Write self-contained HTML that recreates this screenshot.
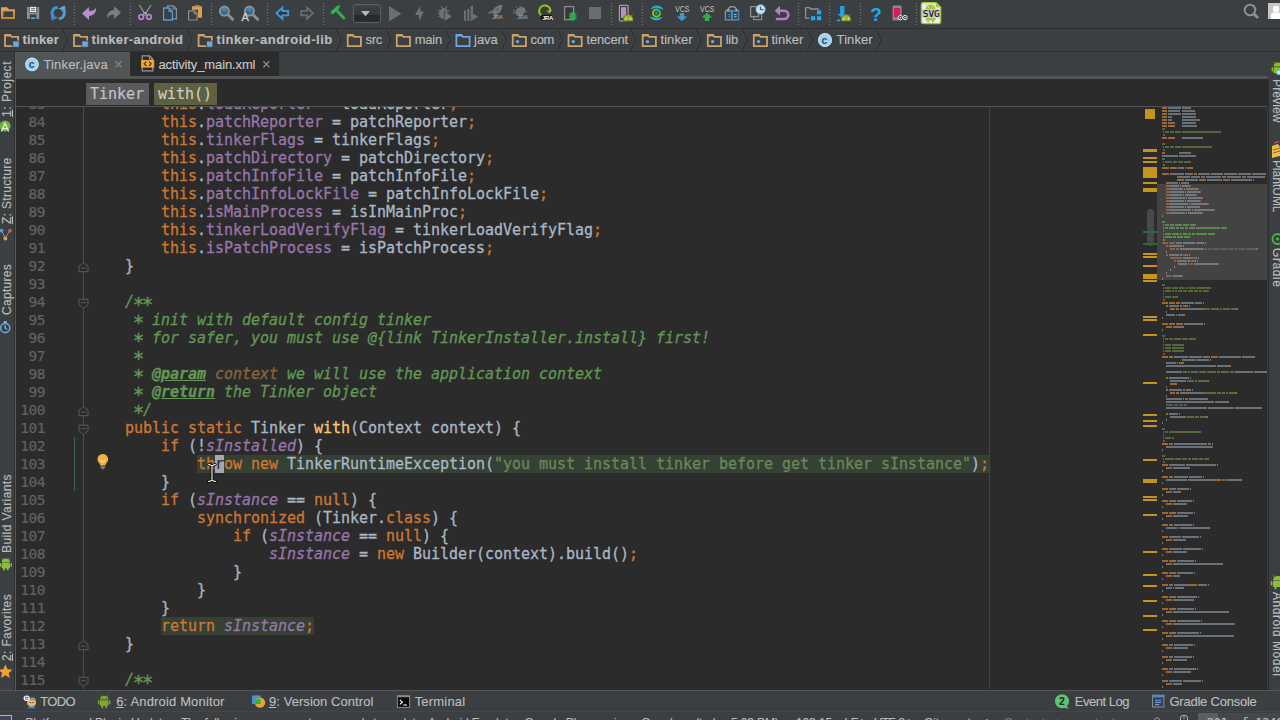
<!DOCTYPE html>
<html lang="en"><head><meta charset="utf-8"><title>Tinker.java - Android Studio</title>
<style>
*{margin:0;padding:0;box-sizing:border-box}
html,body{width:1280px;height:720px;overflow:hidden;background:#3c3f41}
body{-webkit-text-stroke:0.15px;position:relative;font-family:"Liberation Sans","DejaVu Sans",sans-serif;font-size:13px;color:#bbbbbb}
.abs{position:absolute}
svg text{-webkit-text-stroke:0}
#toolbar{left:0;top:0;width:1280px;height:28px;background:#3c3f41}
#tbline{left:0;top:28px;width:1280px;height:1px;background:#2b2d2e}
#nav{left:0;top:29px;width:1280px;height:22px;background:#3c3f41}
#navline{left:0;top:51px;width:1280px;height:1px;background:#2d2f30}
.ic{position:absolute;top:0;overflow:visible}
.sep{position:absolute;top:3px;width:1px;height:22px;background-image:linear-gradient(#6b6e70 50%,transparent 50%);background-size:1px 2px}
.crumb{position:absolute;top:0;height:22px;line-height:21px;white-space:nowrap;color:#bbbbbb;font-size:13px}
.crumb b{font-weight:bold}
#lstripe{left:0;top:52px;width:16px;z-index:5;height:638px;background:#3c3f41}
#rstripe{left:1269px;top:52px;width:11px;height:638px;background:#3c3f41}
.vtxt{position:absolute;white-space:nowrap;font-size:12px;color:#bbbbbb;transform-origin:0 0}
#tabs{left:15px;top:52px;width:1254px;height:25px;background:#3c3f41}
.tab{position:absolute;top:1px;height:24px;line-height:24px;font-size:13px;white-space:nowrap}
#crumbs{left:15px;top:79px;width:1254px;height:28px;background:#2b2b2b;z-index:2}
#editor{left:15px;top:106px;width:1254px;height:584px;background:#2b2b2b;overflow:hidden}
#gutter{left:0;top:0;width:69px;height:583px;background:#2b2b2b}
.ln{position:absolute;left:0;width:30.1px;text-align:right;height:18px;line-height:18px;color:#606366;font-family:"DejaVu Sans Mono","Liberation Mono",monospace;font-size:14.5px;letter-spacing:-0.45px;-webkit-text-stroke:0.2px}
.cl{-webkit-text-stroke:0.3px;position:absolute;left:74px;height:18px;line-height:18px;white-space:pre;color:#a9b7c6;font-family:"DejaVu Sans Mono","Liberation Mono",monospace;font-size:15px;letter-spacing:-0.031px}
.k{color:#cc7832}.f{color:#9876aa}.sf{color:#9876aa;font-style:italic}.m{color:#ffc66d}
.d{color:#629755;font-style:italic}.dt{color:#629755;font-style:italic;font-weight:bold;text-decoration:underline}.dp{color:#8a653b;font-style:italic}
.s{color:#6a8759}
.as{display:inline-block;font-style:normal;transform:translateY(2.9px) scale(1.28)}
.hl{background:#344134}
#bottombar{left:0;top:690px;width:1280px;height:23px;background:#3c3f41}
#status{left:0;top:713px;width:1280px;height:7px;background:#3c3f41;overflow:hidden}
.bt{position:absolute;top:0;height:24px;line-height:24px;font-size:13px;color:#bbbbbb;white-space:nowrap}
.bt u{text-decoration:underline}
.st{position:absolute;top:0px;font-size:12px;line-height:14px;color:#bbbbbb;white-space:nowrap}
</style></head>
<body>
<div id="toolbar" class="abs">
<svg class="abs" style="left:0;top:0" width="1280" height="28" viewBox="0 0 1280 28">
<defs>
<linearGradient id="gfold" x1="0" y1="0" x2="0" y2="1"><stop offset="0" stop-color="#dfa65a"/><stop offset="1" stop-color="#c4822c"/></linearGradient>
<linearGradient id="gblue" x1="0" y1="0" x2="0" y2="1"><stop offset="0" stop-color="#5aa6d6"/><stop offset="1" stop-color="#2f86bd"/></linearGradient>
<linearGradient id="gcombo" x1="0" y1="0" x2="0" y2="1"><stop offset="0" stop-color="#454748"/><stop offset="0.15" stop-color="#3a4042"/><stop offset="0.57" stop-color="#34393b"/><stop offset="0.58" stop-color="#292929"/><stop offset="1" stop-color="#2b2b2b"/></linearGradient>
<radialGradient id="glens" cx="0.5" cy="0.3" r="0.65"><stop offset="0" stop-color="#3f95d0"/><stop offset="1" stop-color="#1f4e75"/></radialGradient>
</defs>
<!-- separators -->
<g stroke="#75787a" stroke-width="1.2" stroke-dasharray="1.1 1.9">
<path d="M74.5 3v23M130.5 3v23M211.5 3v23M267.5 3v23M323.5 3v23M611.5 3v23M642.5 3v23M798.5 3v23M829.5 3v23M860.5 3v23M916.5 3v23"/>
</g>
<!-- open folder -->
<path d="M1 7.2h6.2l1.8 2h6v9.8h-14z" fill="url(#gfold)"/><rect x="3.4" y="11.4" width="9.6" height="5.6" fill="#3c3f41"/>
<!-- save -->
<path d="M27 7h12.2v12H27z" fill="#8e8e8e"/><rect x="29.6" y="6.4" width="7" height="6" rx="0.6" fill="#ffffff" stroke="#3c3f41" stroke-width="0.8"/><path d="M31 8.3h4.3M31 10.3h4.3" stroke="#444" stroke-width="0.9"/><rect x="29.8" y="14.6" width="6.6" height="4.6" fill="#3c3f41"/><rect x="31" y="17.2" width="4.2" height="1.8" fill="#4aa3d9"/>
<!-- sync -->
<g fill="none" stroke-width="3"><path d="M57.6 7.6a5.400 5.400 0 0 0 -3.200 9.800" stroke="#3e93cb"/><path d="M58.8 18.600a5.400 5.400 0 0 0 3.200 -9.800" stroke="#4c9dd2"/></g>
<path d="M50.8 15.800l7.600 1.600l-6.800 3.200z" fill="#3a8ec6"/><path d="M65.600 10.400l-7.600 -1.600l6.800 -3.200z" fill="#62abdb"/>
<!-- undo -->
<path d="M82 13.5l7 -6.5v4c3.5 0 6 -1 7 -3.2c0.6 4.5 -2.5 8 -7 8.2v4z" fill="#b98fcb"/>
<!-- redo -->
<path d="M121 12.6l-7 -6.4v3.8c-4.5 0.2 -7.3 3.5 -7 8.2c1.4 -2.4 3.6 -3.6 7 -3.6v4.4z" fill="#7d7d7d"/>
<!-- cut -->
<path d="M139.3 5l5.9 9.2M151 5l-5.9 9.2" stroke="#a2a2a2" stroke-width="1.1" fill="none"/><rect x="143.8" y="12.6" width="2.6" height="2.6" fill="none" stroke="#b8b8b8" stroke-width="0.7"/>
<circle cx="141.2" cy="17" r="2.3" fill="none" stroke="#b583d3" stroke-width="1.7"/><circle cx="149" cy="17" r="2.3" fill="none" stroke="#b583d3" stroke-width="1.7"/>
<!-- copy -->
<path d="M167.6 5.8h5.8l3 3v10h-8.8z" fill="#3c3f41" stroke="#909090" stroke-width="1.2"/><path d="M173.2 5.8v3.2h3.2" fill="none" stroke="#909090" stroke-width="1"/>
<path d="M163.6 8h5.6l3.2 3.2v8.8h-8.8z" fill="#3c3f41" stroke="#4d9fd4" stroke-width="1.3"/><path d="M169 8v3.4h3.4" fill="none" stroke="#4d9fd4" stroke-width="1.1"/>
<!-- paste -->
<path d="M192 6.2h10v11.6h-4v-8h-6z" fill="#dba04c"/><rect x="195" y="5" width="4.6" height="1.6" fill="#8a8a8a"/>
<path d="M188.6 10.8h5.6l2.8 2.8v6.4h-8.4z" fill="#3c3f41" stroke="#8e8e8e" stroke-width="1.2"/><path d="M194 10.8v3h3" fill="none" stroke="#8e8e8e" stroke-width="1"/>
<!-- find -->
<circle cx="224.4" cy="11.1" r="4.5" fill="url(#glens)" stroke="#8d8d8d" stroke-width="2.1"/><path d="M228.3 15l4.300 4.300" stroke="#8d8d8d" stroke-width="3" stroke-linecap="round"/>
<!-- replace -->
<circle cx="249.4" cy="11.1" r="4.5" fill="url(#glens)" stroke="#8d8d8d" stroke-width="2.1"/><path d="M253.3 15l4.300 4.300" stroke="#8d8d8d" stroke-width="3" stroke-linecap="round"/>
<text x="241.6" y="20.6" font-family="Liberation Sans, sans-serif" font-size="11" fill="#d2d2d2" stroke="#d2d2d2" stroke-width="0.3">A</text>
<!-- back -->
<path d="M276.4 13.2l6 -5.6v3.4h5.8v4.4h-5.8v3.4z" fill="#34383b" stroke="#3d97d6" stroke-width="1.9" stroke-linejoin="miter"/>
<!-- forward -->
<path d="M313 13.2l-6 -5.6v3.4h-5.8v4.4h5.8v3.4z" fill="#3c3f41" stroke="#6d6f70" stroke-width="1.7"/>
<!-- hammer -->
<path d="M332.4 12.4l5.4 -4.8" stroke="#2fb552" stroke-width="3.4" stroke-linecap="round"/><path d="M337.2 7l2.2 -1" stroke="#2fb552" stroke-width="1.6" stroke-linecap="round"/><path d="M336.6 10.4l7.2 7.6" stroke="#2fb552" stroke-width="2.8" stroke-linecap="round"/>
<!-- combo -->
<rect x="353.5" y="4.5" width="27" height="18" rx="2.5" fill="url(#gcombo)" stroke="#5d6062" stroke-width="1"/>
<path d="M361 11h9l-4.5 5.2z" fill="#b4b8b7"/>
<!-- run -->
<path d="M389 6v15.4l12.4 -7.7z" fill="#6c6e6f"/>
<!-- lightning -->
<path d="M420 5.8l-4.8 9.2h3.6l0.4 5.8l4.6 -9.4h-3.4z" fill="#727374"/>
<!-- debug -->
<g fill="#6f7071"><ellipse cx="443.8" cy="13.6" rx="4.6" ry="5.6"/><path d="M441.2 6.2l1.6 2.6M446.8 6.2l-1.6 2.6M438.2 10.6h2M438.2 13.4h2M438.2 16.2h2M449.4 10.6h-2" stroke="#6f7071" stroke-width="1.1" fill="none"/></g>
<path d="M444.4 11v10.6l8 -5.3z" fill="#747576" stroke="#3c3f41" stroke-width="0.8"/>
<!-- coverage -->
<g fill="#6d6e6f"><rect x="464" y="10.4" width="2" height="10.6"/><rect x="467.2" y="9" width="2.2" height="12"/><rect x="470.6" y="6" width="2.4" height="7"/><path d="M470.6 12v9.4l7.4 -4.8z"/></g>
<!-- rocket JR -->
<g fill="#747576"><path d="M502.4 4.8c-4.6 0 -8.6 2.8 -10.6 7.6l3.4 3c4.8 -2 7.2 -5.6 7.2 -10.600z"/><path d="M492.400 9.8l-4.800 3.400l3.600 0.600z"/><path d="M497 14.6l-0.400 3.600l-2.200 -2.400z"/></g><circle cx="497.600" cy="9.400" r="1.300" fill="#5f6162"/>
<text x="492" y="19.4" font-family="Liberation Sans, sans-serif" font-size="5.8" font-weight="bold" fill="#929394" letter-spacing="-0.35">JRA</text>
<!-- bug JR -->
<g fill="#747576"><ellipse cx="520.4" cy="11.4" rx="5.4" ry="4" transform="rotate(-35 520.4 11.4)"/><path d="M515.6 6.6l2 2M520 5.4l0.4 2.4M513 10l2.6 1M512.6 12.8l2.4 0M526.8 11.6l-2.4 0" stroke="#747576" stroke-width="1" fill="none"/></g>
<text x="517" y="19.4" font-family="Liberation Sans, sans-serif" font-size="5.8" font-weight="bold" fill="#929394" letter-spacing="-0.35">JRA</text>
<!-- reload JR -->
<path d="M542.6 16.2a5.6 5.6 0 1 1 7.8 -5" fill="none" stroke="#8dc51f" stroke-width="2.1"/><path d="M546.8 10.4h4.8l-2.2 3.4z" fill="#8dc51f"/>
<rect x="540.6" y="14.8" width="12" height="5.6" rx="1.4" fill="#141414"/>
<text x="542.2" y="19.6" font-family="Liberation Sans, sans-serif" font-size="5.8" font-weight="bold" fill="#ffffff" letter-spacing="-0.35">JRA</text>
<!-- attach debugger -->
<rect x="564.6" y="6.6" width="9" height="13" fill="#36393b" stroke="#8b8b8b" stroke-width="1.3"/>
<g fill="#2fab50"><ellipse cx="572.8" cy="16.4" rx="2.8" ry="4.4"/><path d="M569 13.8h7.6M568.8 16.2h8M569 18.6h7.6" stroke="#2fab50" stroke-width="1" fill="none"/></g>
<!-- stop -->
<rect x="589" y="7" width="12" height="12" fill="#6b6d6e"/>
<!-- AVD -->
<rect x="619.4" y="5.4" width="8.8" height="15.4" rx="0.8" fill="#3c3f41" stroke="#a0a0a0" stroke-width="1.2"/><rect x="621" y="7.2" width="5.2" height="10.8" fill="#b88fc8"/>
<g><path d="M623.2 21.2v-2.2a5 4.4 0 0 1 10 0v2.2z" fill="#9ab922" stroke="#3c3f41" stroke-width="0.6"/><path d="M624.8 15.6l-0.8 -1.2M631.6 15.6l0.8 -1.2" stroke="#9ab922" stroke-width="0.8"/><circle cx="626" cy="18.8" r="0.7" fill="#fff"/><circle cx="630.6" cy="18.8" r="0.7" fill="#fff"/></g>
<!-- gradle sync -->
<path d="M651.2 8.6c2.600 -3.400 8.600 -3.400 11.600 0.400c-3.400 -1.800 -8 -2 -11.600 -0.400z" fill="#1fb4f0" stroke="#1fb4f0" stroke-width="0.900" stroke-linejoin="round"/>
<path d="M650.2 17c3 3.800 8.800 3.800 11.800 0.400c-3.600 1.600 -8.200 1.400 -11.800 -0.400z" fill="#1fb4f0" stroke="#1fb4f0" stroke-width="0.900" stroke-linejoin="round"/>
<circle cx="656.500" cy="13.100" r="3.500" fill="none" stroke="#9cc40a" stroke-width="1.900"/><path d="M654.600 10.100a3.500 3.500 0 0 1 5.300 3.800" fill="none" stroke="#22b463" stroke-width="1.900"/><circle cx="656.500" cy="13.100" r="1.300" fill="#14b070"/>
<!-- VCS down -->
<text x="675" y="12.2" font-family="Liberation Sans, sans-serif" font-size="8.4" fill="#c6c6c6" textLength="14.400" lengthAdjust="spacingAndGlyphs">VCS</text>
<path d="M679.8 13h4.4v3.6h3l-5.2 4.6l-5.2 -4.6h3z" fill="#3f97cf"/>
<!-- VCS up -->
<text x="700" y="12.2" font-family="Liberation Sans, sans-serif" font-size="8.4" fill="#c6c6c6" textLength="14.400" lengthAdjust="spacingAndGlyphs">VCS</text>
<path d="M704.8 21h4.4v-3.6h3l-5.2 -4.6l-5.2 4.6h3z" fill="#2fb04f"/>
<!-- compare -->
<path d="M725.4 11h6.4v8.8h-6.4z" fill="#3c3f41" stroke="#8a8a8a" stroke-width="1.3"/><path d="M732.4 11h6.2v8.8h-6.2z" fill="#3c3f41" stroke="#2d8fd0" stroke-width="1.4"/>
<path d="M728.4 14.6h2.2M728.4 16.8h2.2" stroke="#2d9be0" stroke-width="1"/><path d="M734.2 14.6h2.4M734.2 16.8h2.4" stroke="#c8c8c8" stroke-width="1"/>
<path d="M728 10.4c0.6 -5 8 -5 8.6 0" fill="none" stroke="#a0a0a0" stroke-width="1.2"/><path d="M726 9.2h4l-2 2.6zM734.6 9.2h4l-2 2.6z" fill="#a0a0a0"/>
<!-- history -->
<rect x="753.6" y="12" width="8" height="7.6" fill="none" stroke="#8a8a8a" stroke-width="1.2"/><rect x="750.6" y="6.6" width="8" height="10" fill="#3c3f41" stroke="#8f8f8f" stroke-width="1.3"/>
<circle cx="760.6" cy="9.4" r="4.6" fill="#bfe3fb"/><circle cx="760.6" cy="9.4" r="4.6" fill="none" stroke="#7cc0ee" stroke-width="0.8"/><path d="M760.4 6.6v3h3" stroke="#333" stroke-width="0.9" fill="none"/>
<!-- revert -->
<path d="M779 10.8h5.2a4.1 4.1 0 0 1 0 8.2h-8.400" fill="none" stroke="#b07cc6" stroke-width="2.6"/><path d="M774.6 10.8l5.4 -5v10z" fill="#b07cc6"/>
<!-- project structure -->
<path d="M805.6 7.6h4l0.8 1.4h8.4M805.6 7.6v10.6h4" fill="none" stroke="#8f9294" stroke-width="1.3"/>
<g fill="#1eabf2"><rect x="817" y="10.4" width="4.2" height="4"/><rect x="811" y="16.2" width="4.2" height="4"/><rect x="817" y="16.2" width="4.2" height="4"/></g>
<!-- sdk manager -->
<path d="M840 6h4.4v8h2.6l-4.8 4.4l-4.8 -4.4h2.6z" fill="#2a9de2"/><rect x="837" y="19.6" width="3.2" height="1.6" fill="#1eabf2"/>
<g><path d="M841 21.2v-2.2a5 4.4 0 0 1 10 0v2.2z" fill="#9ab922" stroke="#3c3f41" stroke-width="0.6"/><path d="M842.6 15.6l-0.8 -1.2M849.4 15.6l0.8 -1.2" stroke="#9ab922" stroke-width="0.8"/><circle cx="843.8" cy="18.8" r="0.7" fill="#fff"/><circle cx="848.4" cy="18.8" r="0.7" fill="#fff"/></g>
<!-- help -->
<text x="870.2" y="20.6" font-family="Liberation Sans, sans-serif" font-size="19" font-weight="bold" fill="#1eabf2">?</text>
<!-- device monitor -->
<rect x="892.6" y="5.6" width="9" height="15" rx="0.8" fill="#8a8a8a"/><rect x="894" y="8" width="6.2" height="9.4" fill="#e0185e"/>
<circle cx="900.4" cy="17.6" r="2.2" fill="#2b2b2b" stroke="#e8e8e8" stroke-width="1"/><circle cx="905" cy="17.6" r="2.2" fill="#2b2b2b" stroke="#e8e8e8" stroke-width="1"/><rect x="899.6" y="16.8" width="1.6" height="1.6" fill="#ddd"/><rect x="904.2" y="16.8" width="1.6" height="1.6" fill="#ddd"/>
<!-- SVG badge -->
<path d="M923.4 2.6h12.6l4.6 4.6v14.4a2 2 0 0 1 -2 2h-15.2a2 2 0 0 1 -2 -2v-17a2 2 0 0 1 2 -2z" fill="#ececec" stroke="#a4c639" stroke-width="1.4"/>
<path d="M936 2.6v4.6h4.6z" fill="#a4c639"/>
<path d="M925.6 9.2a5 4.6 0 0 1 10 0z" fill="#a4c639"/><path d="M926.8 5.4l-0.9 -1.3M934.4 5.4l0.9 -1.3" stroke="#a4c639" stroke-width="0.8"/><circle cx="928.4" cy="7" r="0.6" fill="#fff"/><circle cx="932.8" cy="7" r="0.6" fill="#fff"/>
<path d="M925.6 17.8h10v1.4a1.4 1.4 0 0 1 -1.4 1.4h-7.2a1.4 1.4 0 0 1 -1.4 -1.4z" fill="#a4c639"/><rect x="927.4" y="20" width="1.8" height="2.4" fill="#a4c639"/><rect x="932" y="20" width="1.8" height="2.4" fill="#a4c639"/>
<rect x="922.2" y="9.4" width="17.6" height="8.2" fill="#c2c4c2"/>
<text x="922.8" y="16.6" font-family="DejaVu Sans Mono, monospace" font-size="9.4" fill="#000">SVG</text>
<!-- search everywhere -->
<circle cx="1250" cy="10" r="5.3" fill="none" stroke="#8f8f8f" stroke-width="2"/><path d="M1254 14l4 4" stroke="#8f8f8f" stroke-width="2.8" stroke-linecap="butt"/>
<!-- avatar -->
<rect x="1268" y="3" width="12" height="16" fill="#c6c6c6"/><circle cx="1276" cy="9" r="3.2" fill="#fff"/><path d="M1271 19v-3.4a3 3 0 0 1 3 -3h6v6.4z" fill="#fff"/>
</svg>

</div>
<div id="tbline" class="abs"></div>
<div id="nav" class="abs">
<svg class="abs" style="left:0;top:0" width="1280" height="22" viewBox="0 29 1280 22">
<path d="M5.0 35h5.2l1.4 1.8h6.6v9.4h-13.2z" fill="none" stroke="#c9a26d" stroke-width="1.8"/><path d="M4.6 34.4h5.4l1.4 2.2h-6.8z" fill="#c9a26d"/><rect x="12.8" y="41" width="6.4" height="6.2" fill="#6fa8dc" stroke="#3c3f41" stroke-width="0.8"/>
<path d="M61.6 28.5l5.4 11.4l-5.4 11.4" fill="none" stroke="#2a2c2d" stroke-width="1.1"/><path d="M60.6 28.5l5.4 11.4l-5.4 11.4" fill="none" stroke="#4b4e50" stroke-width="0.7"/>
<path d="M74.0 35h5.2l1.4 1.8h6.6v9.4h-13.2z" fill="none" stroke="#c9a26d" stroke-width="1.8"/><path d="M73.6 34.4h5.4l1.4 2.2h-6.8z" fill="#c9a26d"/><rect x="81.8" y="41" width="6.4" height="6.2" fill="#6fa8dc" stroke="#3c3f41" stroke-width="0.8"/>
<path d="M186.2 28.5l5.4 11.4l-5.4 11.4" fill="none" stroke="#2a2c2d" stroke-width="1.1"/><path d="M185.2 28.5l5.4 11.4l-5.4 11.4" fill="none" stroke="#4b4e50" stroke-width="0.7"/>
<path d="M198.6 35h5.2l1.4 1.8h6.6v9.4h-13.2z" fill="none" stroke="#c9a26d" stroke-width="1.8"/><path d="M198.2 34.4h5.4l1.4 2.2h-6.8z" fill="#c9a26d"/><rect x="206.4" y="41" width="6.4" height="6.2" fill="#6fa8dc" stroke="#3c3f41" stroke-width="0.8"/>
<path d="M335.5 28.5l5.4 11.4l-5.4 11.4" fill="none" stroke="#2a2c2d" stroke-width="1.1"/><path d="M334.5 28.5l5.4 11.4l-5.4 11.4" fill="none" stroke="#4b4e50" stroke-width="0.7"/>
<path d="M347.7 35h5.2l1.4 1.8h6.6v9.4h-13.2z" fill="none" stroke="#c9a26d" stroke-width="1.8"/><path d="M347.3 34.4h5.4l1.4 2.2h-6.8z" fill="#c9a26d"/>
<path d="M385.0 28.5l5.4 11.4l-5.4 11.4" fill="none" stroke="#2a2c2d" stroke-width="1.1"/><path d="M384.0 28.5l5.4 11.4l-5.4 11.4" fill="none" stroke="#4b4e50" stroke-width="0.7"/>
<path d="M396.8 35h5.2l1.4 1.8h6.6v9.4h-13.2z" fill="none" stroke="#c9a26d" stroke-width="1.8"/><path d="M396.4 34.4h5.4l1.4 2.2h-6.8z" fill="#c9a26d"/>
<path d="M444.6 28.5l5.4 11.4l-5.4 11.4" fill="none" stroke="#2a2c2d" stroke-width="1.1"/><path d="M443.6 28.5l5.4 11.4l-5.4 11.4" fill="none" stroke="#4b4e50" stroke-width="0.7"/>
<path d="M456.4 35h5.2l1.4 1.8h6.6v9.4h-13.2z" fill="none" stroke="#6ea7dc" stroke-width="1.8"/><path d="M456.0 34.4h5.4l1.4 2.2h-6.8z" fill="#6ea7dc"/>
<path d="M500.5 28.5l5.4 11.4l-5.4 11.4" fill="none" stroke="#2a2c2d" stroke-width="1.1"/><path d="M499.5 28.5l5.4 11.4l-5.4 11.4" fill="none" stroke="#4b4e50" stroke-width="0.7"/>
<path d="M512.7 35h5.2l1.4 1.8h6.6v9.4h-13.2z" fill="none" stroke="#c9a26d" stroke-width="1.8"/><path d="M512.3 34.4h5.4l1.4 2.2h-6.8z" fill="#c9a26d"/><circle cx="517.5" cy="41.6" r="1.7" fill="#6fa8dc"/>
<path d="M556.6 28.5l5.4 11.4l-5.4 11.4" fill="none" stroke="#2a2c2d" stroke-width="1.1"/><path d="M555.6 28.5l5.4 11.4l-5.4 11.4" fill="none" stroke="#4b4e50" stroke-width="0.7"/>
<path d="M568.5 35h5.2l1.4 1.8h6.6v9.4h-13.2z" fill="none" stroke="#c9a26d" stroke-width="1.8"/><path d="M568.1 34.4h5.4l1.4 2.2h-6.8z" fill="#c9a26d"/><circle cx="573.3" cy="41.6" r="1.7" fill="#6fa8dc"/>
<path d="M630.3 28.5l5.4 11.4l-5.4 11.4" fill="none" stroke="#2a2c2d" stroke-width="1.1"/><path d="M629.3 28.5l5.4 11.4l-5.4 11.4" fill="none" stroke="#4b4e50" stroke-width="0.7"/>
<path d="M642.7 35h5.2l1.4 1.8h6.6v9.4h-13.2z" fill="none" stroke="#c9a26d" stroke-width="1.8"/><path d="M642.3 34.4h5.4l1.4 2.2h-6.8z" fill="#c9a26d"/><circle cx="647.5" cy="41.6" r="1.7" fill="#6fa8dc"/>
<path d="M695.6 28.5l5.4 11.4l-5.4 11.4" fill="none" stroke="#2a2c2d" stroke-width="1.1"/><path d="M694.6 28.5l5.4 11.4l-5.4 11.4" fill="none" stroke="#4b4e50" stroke-width="0.7"/>
<path d="M707.8 35h5.2l1.4 1.8h6.6v9.4h-13.2z" fill="none" stroke="#c9a26d" stroke-width="1.8"/><path d="M707.4 34.4h5.4l1.4 2.2h-6.8z" fill="#c9a26d"/><circle cx="712.6" cy="41.6" r="1.7" fill="#6fa8dc"/>
<path d="M741.5 28.5l5.4 11.4l-5.4 11.4" fill="none" stroke="#2a2c2d" stroke-width="1.1"/><path d="M740.5 28.5l5.4 11.4l-5.4 11.4" fill="none" stroke="#4b4e50" stroke-width="0.7"/>
<path d="M753.8 35h5.2l1.4 1.8h6.6v9.4h-13.2z" fill="none" stroke="#c9a26d" stroke-width="1.8"/><path d="M753.4 34.4h5.4l1.4 2.2h-6.8z" fill="#c9a26d"/><circle cx="758.6" cy="41.6" r="1.7" fill="#6fa8dc"/>
<path d="M806.6 28.5l5.4 11.4l-5.4 11.4" fill="none" stroke="#2a2c2d" stroke-width="1.1"/><path d="M805.6 28.5l5.4 11.4l-5.4 11.4" fill="none" stroke="#4b4e50" stroke-width="0.7"/>
<circle cx="825" cy="40" r="7" fill="#9fd4f3"/><circle cx="825" cy="40" r="6.4" fill="none" stroke="#c4e6fa" stroke-width="0.8"/>
<text x="821.6" y="43.6" font-family="Liberation Sans, sans-serif" font-size="10.5" font-weight="bold" fill="#3b4a55">c</text>
<path d="M875.4 28.5l5.4 11.4l-5.4 11.4" fill="none" stroke="#2a2c2d" stroke-width="1.1"/><path d="M874.4 28.5l5.4 11.4l-5.4 11.4" fill="none" stroke="#4b4e50" stroke-width="0.7"/>
</svg>
<span class="crumb" style="left:22.5px;letter-spacing:0.183px;"><b>tinker</b></span>
<span class="crumb" style="left:91.5px;letter-spacing:0.307px;"><b>tinker-android</b></span>
<span class="crumb" style="left:216.6px;letter-spacing:0.517px;"><b>tinker-android-lib</b></span>
<span class="crumb" style="left:365.6px;letter-spacing:-0.310px;">src</span>
<span class="crumb" style="left:414.7px;letter-spacing:-0.219px;">main</span>
<span class="crumb" style="left:474.0px;letter-spacing:-0.012px;">java</span>
<span class="crumb" style="left:530.6px;letter-spacing:-0.386px;">com</span>
<span class="crumb" style="left:586.5px;letter-spacing:-0.163px;">tencent</span>
<span class="crumb" style="left:660.5px;letter-spacing:0.052px;">tinker</span>
<span class="crumb" style="left:725.7px;letter-spacing:-0.202px;">lib</span>
<span class="crumb" style="left:771.4px;letter-spacing:0.035px;">tinker</span>
<span class="crumb" style="left:836.6px;letter-spacing:0.078px;">Tinker</span>

</div>
<div id="navline" class="abs"></div>
<div id="lstripe" class="abs">
<div class="abs" style="left:14px;top:0;width:1px;height:638px;background:#2c2d2e"></div>
<div class="abs" style="left:15px;top:0;width:1px;height:638px;background:#565a5b;z-index:6"></div>
<span class="vtxt" style="left:-0.2px;top:64.5px;height:14px;line-height:14px;letter-spacing:0.531px;transform:rotate(-90deg)"><u>1</u>: Project</span>
<span class="vtxt" style="left:-0.2px;top:171.5px;height:14px;line-height:14px;letter-spacing:0.318px;transform:rotate(-90deg)"><u>Z</u>: Structure</span>
<span class="vtxt" style="left:-0.2px;top:262.5px;height:14px;line-height:14px;letter-spacing:0.289px;transform:rotate(-90deg)">Captures</span>
<span class="vtxt" style="left:-0.2px;top:500.5px;height:14px;line-height:14px;letter-spacing:0.418px;transform:rotate(-90deg)">Build Variants</span>
<span class="vtxt" style="left:-0.2px;top:608.5px;height:14px;line-height:14px;letter-spacing:0.359px;transform:rotate(-90deg)"><u>2</u>: Favorites</span>
<svg class="abs" style="left:0;top:0" width="15" height="637" viewBox="0 52 15 637"><circle cx="5" cy="126" r="5.6" fill="#6fb43c"/><path d="M1.4 131.6l3.6 -8.6l3.6 8.6M2.8 128.6h4.6" fill="none" stroke="#e6efe0" stroke-width="1.2"/><path d="M1.6 230.6l3.6 7.4l4.6 -7.4" fill="none" stroke="#9a9a9a" stroke-width="0.9"/><circle cx="1.6" cy="230.6" r="1.9" fill="#4a9fe0"/><circle cx="10" cy="230.6" r="1.9" fill="#e0524a"/><circle cx="5.4" cy="238.4" r="2" fill="#e69a3a"/><circle cx="5.2" cy="328" r="4.6" fill="#3c3f41" stroke="#5aa7de" stroke-width="1.6"/><path d="M5.2 325.4v2.8l2 1.2" stroke="#d0d0d0" stroke-width="1" fill="none"/><rect x="3.6" y="321.2" width="3.2" height="1.6" fill="#8cbfe6"/><g fill="#8bbf3b"><path d="M1.6 562.4a4.2 4 0 0 1 8.4 0z"/><rect x="1.6" y="563" width="8.4" height="5.4" rx="0.8"/><rect x="-0.4" y="563" width="1.4" height="4" rx="0.7"/><rect x="10.6" y="563" width="1.4" height="4" rx="0.7"/><rect x="3" y="568" width="1.6" height="2.4"/><rect x="7" y="568" width="1.6" height="2.4"/><path d="M2.8 559.4l-0.8 -1.4M8.8 559.4l0.8 -1.4" stroke="#8bbf3b" stroke-width="0.7"/></g><path d="M5.4 664.6l2.1 4.6l5 0.5l-3.8 3.3l1.1 4.9l-4.4 -2.6l-4.4 2.6l1.1 -4.9l-3.8 -3.3l5 -0.5z" fill="#f0a030"/></svg>

</div>
<div id="rstripe" class="abs">
<div class="abs" style="left:-1px;top:0;width:1px;height:637px;background:#515355"></div>
<span class="vtxt" style="left:14.8px;top:26.6px;height:14px;line-height:14px;letter-spacing:0.131px;transform:rotate(90deg)">Preview</span>
<span class="vtxt" style="left:14.8px;top:107.6px;height:14px;line-height:14px;letter-spacing:-0.023px;transform:rotate(90deg)">PlantUML</span>
<span class="vtxt" style="left:14.8px;top:196.0px;height:14px;line-height:14px;letter-spacing:0.580px;transform:rotate(90deg)">Gradle</span>
<span class="vtxt" style="left:14.8px;top:540.0px;height:14px;line-height:14px;letter-spacing:0.548px;transform:rotate(90deg)">Android Model</span>
<svg class="abs" style="left:0;top:0" width="11" height="637" viewBox="1269 52 11 637"><g fill="#8cbf20"><path d="M1273.6 66.400a4.600 4 0 0 1 9.200 0z"/><rect x="1273.6" y="67.200" width="9.200" height="6" rx="0.800"/><rect x="1271.600" y="67.200" width="1.400" height="4.400" rx="0.700"/><path d="M1275 63.200l-0.800 -1.400" stroke="#8cbf20" stroke-width="0.800"/></g><circle cx="1278.800" cy="72.400" r="2.400" fill="#bfe3fb" stroke="#5aa7de" stroke-width="0.800"/><path d="M1272 146l6 -2l2 3v9l-8 2z" fill="#e8c23a"/><path d="M1273 150l7 -2M1273 153l7 -2" stroke="#a04a8a" stroke-width="1"/><path d="M1274 143l5 -1.5" stroke="#e05a5a" stroke-width="1"/><circle cx="1277.5" cy="239" r="5" fill="none" stroke="#4fb548" stroke-width="1.8"/><circle cx="1277.5" cy="239" r="1.6" fill="#4fb548"/><g fill="#8bbf3b"><path d="M1273 580.4a5 4.4 0 0 1 10 0z"/><rect x="1273" y="581" width="10" height="6" rx="0.8"/><rect x="1270.8" y="581" width="1.5" height="4.4" rx="0.7"/><rect x="1274.6" y="586.6" width="1.8" height="2.6"/><path d="M1274.6 577l-1 -1.6" stroke="#8bbf3b" stroke-width="0.8"/></g></svg>

</div>
<div id="tabs" class="abs">
<div class="abs" style="left:0;top:0;width:115px;height:24px;background:#515556"></div>
<div class="abs" style="left:115px;top:0;width:149px;height:24px;background:#2b2b2b"></div>
<div class="abs" style="left:0;top:24px;width:1252px;height:3px;background:#505455"></div>
<svg class="abs" style="left:0;top:0" width="300" height="24" viewBox="15 52 300 24"><circle cx="32" cy="64.4" r="6.8" fill="#9fd4f3"/><circle cx="32" cy="64.4" r="6.2" fill="none" stroke="#c4e6fa" stroke-width="0.8"/><text x="28.7" y="68" font-family="Liberation Sans, sans-serif" font-size="10.5" font-weight="bold" fill="#3b4a55">c</text><path d="M115.4 61.2l6 6M121.4 61.2l-6 6" stroke="#7f8385" stroke-width="1.3"/><path d="M263.4 61.2l6 6M269.4 61.2l-6 6" stroke="#8a8d8f" stroke-width="1.3"/><path d="M142.2 55.8h7.4l3.2 3.2v11.8h-10.6z" fill="#2b2b2b" stroke="#9a9a9a" stroke-width="1.2"/><path d="M149.4 55.8v3.4h3.4" fill="none" stroke="#9a9a9a" stroke-width="1"/><rect x="141.2" y="60" width="13" height="7.6" fill="#f0a732"/><path d="M146.4 61.6l-2.2 2.2l2.2 2.2M149 61.6l2.2 2.2l-2.2 2.2" fill="none" stroke="#3a2a10" stroke-width="1.1"/></svg>
<span class="tab" style="left:28.4px;letter-spacing:0.184px;color:#bbbbbb">Tinker.java</span>
<span class="tab" style="left:143.4px;letter-spacing:-0.116px;color:#c6c6c6">activity_main.xml</span>

</div>
<div id="crumbs" class="abs">
<div class="abs" style="left:71px;top:4px;width:63px;height:22px;background:#595b5d"></div>
<div class="abs" style="left:139px;top:4px;width:63px;height:22px;background:#5d6041"></div>
<span class="abs" style="left:75px;top:4px;height:22px;line-height:22px;font-family:'DejaVu Sans Mono','Liberation Mono',monospace;font-size:15px;letter-spacing:-0.031px;color:#c4c4c4;white-space:pre">Tinker</span>
<span class="abs" style="left:143px;top:4px;height:22px;line-height:22px;font-family:'DejaVu Sans Mono','Liberation Mono',monospace;font-size:15px;letter-spacing:-0.031px;color:#cfcfc0;white-space:pre">with()</span>
<div class="abs" style="left:0;top:27px;width:1252px;height:1px;background:#515455"></div>

</div>
<div id="editor" class="abs">
<div id="gutter" class="abs"></div>
<div class="abs" style="left:68px;top:0;width:1px;height:583px;background:#4a4c4e"></div>
<div class="abs" style="left:974px;top:0;width:1px;height:583px;background:#444444"></div>
<div class="abs" style="left:59px;top:331px;width:1px;height:54px;background:#3e6464"></div>
<svg class="abs" style="left:0;top:0" width="1254" height="583" viewBox="15 106 1254 583">
<path d="M79 271.7v-5.6l4.5 -3.6l4.5 3.6v5.6z" fill="#2b2b2b" stroke="#585b5d" stroke-width="1"/><path d="M81 268.2h5" stroke="#585b5d" stroke-width="1"/>
<path d="M79 415.7v-5.6l4.5 -3.6l4.5 3.6v5.6z" fill="#2b2b2b" stroke="#585b5d" stroke-width="1"/><path d="M81 412.2h5" stroke="#585b5d" stroke-width="1"/>
<path d="M79 649.7v-5.6l4.5 -3.6l4.5 3.6v5.6z" fill="#2b2b2b" stroke="#585b5d" stroke-width="1"/><path d="M81 646.2h5" stroke="#585b5d" stroke-width="1"/>
<path d="M79 299.2v5.6l4.5 3.6l4.5 -3.6v-5.6z" fill="#2b2b2b" stroke="#585b5d" stroke-width="1"/><path d="M81 302.7h5" stroke="#585b5d" stroke-width="1"/>
<path d="M79 425.2v5.6l4.5 3.6l4.5 -3.6v-5.6z" fill="#2b2b2b" stroke="#585b5d" stroke-width="1"/><path d="M81 428.7h5" stroke="#585b5d" stroke-width="1"/>
<path d="M79 677.2v5.6l4.5 3.6l4.5 -3.6v-5.6z" fill="#2b2b2b" stroke="#585b5d" stroke-width="1"/><path d="M81 680.7h5" stroke="#585b5d" stroke-width="1"/>
<path d="M102.8 454a5.300 5.300 0 0 1 3.200 9.500l-0.600 1.500h-5.200l-0.600 -1.500a5.300 5.300 0 0 1 3.200 -9.500z" fill="#f4af3d"/><path d="M100.6 459.4l1.2 3l1 -2l1 2l1.2 -3" fill="none" stroke="#fbe7b5" stroke-width="0.8"/><path d="M100.4 465.8h4.8M100.4 467.3h4.8" stroke="#a0a0a0" stroke-width="1"/><path d="M101.4 468.6h2.8" stroke="#8a8a8a" stroke-width="0.9"/>
</svg>
<div class="abs" style="left:200px;top:349px;width:9px;height:18px;background:#a4a9ad;z-index:3"></div>
<span class="abs" style="left:200px;top:349px;height:18px;line-height:18px;font-family:'DejaVu Sans Mono',monospace;font-size:15px;color:#2b2b2b;z-index:4">r</span>
<svg class="abs" style="left:190px;top:355px;z-index:5" width="16" height="24" viewBox="205 461 16 24"><path d="M208.6 464.6c1.6 0 2.8 0.4 3.4 1.4c0.6 -1 1.8 -1.4 3.4 -1.4M212 466v14M208.6 481.4c1.6 0 2.8 -0.4 3.4 -1.4c0.6 1 1.8 1.4 3.4 1.4" fill="none" stroke="#000" stroke-width="2.6" stroke-linecap="round"/><path d="M208.6 464.6c1.6 0 2.8 0.4 3.4 1.4c0.6 -1 1.8 -1.4 3.4 -1.4M212 466v14M208.6 481.4c1.6 0 2.8 -0.4 3.4 -1.4c0.6 1 1.8 1.4 3.4 1.4" fill="none" stroke="#fff" stroke-width="1.1" stroke-linecap="round"/></svg>

<div class="ln" style="top:-11.2px">83</div><div class="cl" style="top:-11px">        <span class="k">this</span>.<span class="f">loadReporter</span> = loadReporter<span class="k">;</span></div>
<div class="ln" style="top:6.8px">84</div><div class="cl" style="top:7px">        <span class="k">this</span>.<span class="f">patchReporter</span> = patchReporter<span class="k">;</span></div>
<div class="ln" style="top:24.8px">85</div><div class="cl" style="top:25px">        <span class="k">this</span>.<span class="f">tinkerFlags</span> = tinkerFlags<span class="k">;</span></div>
<div class="ln" style="top:42.8px">86</div><div class="cl" style="top:43px">        <span class="k">this</span>.<span class="f">patchDirectory</span> = patchDirectory<span class="k">;</span></div>
<div class="ln" style="top:60.8px">87</div><div class="cl" style="top:61px">        <span class="k">this</span>.<span class="f">patchInfoFile</span> = patchInfoFile<span class="k">;</span></div>
<div class="ln" style="top:78.8px">88</div><div class="cl" style="top:79px">        <span class="k">this</span>.<span class="f">patchInfoLockFile</span> = patchInfoLockFile<span class="k">;</span></div>
<div class="ln" style="top:96.8px">89</div><div class="cl" style="top:97px">        <span class="k">this</span>.<span class="f">isMainProcess</span> = isInMainProc<span class="k">;</span></div>
<div class="ln" style="top:114.8px">90</div><div class="cl" style="top:115px">        <span class="k">this</span>.<span class="f">tinkerLoadVerifyFlag</span> = tinkerLoadVerifyFlag<span class="k">;</span></div>
<div class="ln" style="top:132.8px">91</div><div class="cl" style="top:133px">        <span class="k">this</span>.<span class="f">isPatchProcess</span> = isPatchProcess<span class="k">;</span></div>
<div class="ln" style="top:150.8px">92</div><div class="cl" style="top:151px">    }</div>
<div class="ln" style="top:168.8px">93</div><div class="cl" style="top:169px"></div>
<div class="ln" style="top:186.8px">94</div><div class="cl" style="top:187px">    <span class="d">/<span class="as">*</span><span class="as">*</span></span></div>
<div class="ln" style="top:204.8px">95</div><div class="cl" style="top:205px">    <span class="d"> <span class="as">*</span> init with default config tinker</span></div>
<div class="ln" style="top:222.8px">96</div><div class="cl" style="top:223px">    <span class="d"> <span class="as">*</span> for safer, you must use @{link TinkerInstaller.install} first!</span></div>
<div class="ln" style="top:240.8px">97</div><div class="cl" style="top:241px">    <span class="d"> <span class="as">*</span></span></div>
<div class="ln" style="top:258.8px">98</div><div class="cl" style="top:259px">    <span class="d"> <span class="as">*</span> </span><span class="dt">@param</span><span class="d"> </span><span class="dp">context</span><span class="d"> we will use the application context</span></div>
<div class="ln" style="top:276.8px">99</div><div class="cl" style="top:277px">    <span class="d"> <span class="as">*</span> </span><span class="dt">@return</span><span class="d"> the Tinker object</span></div>
<div class="ln" style="top:294.8px">100</div><div class="cl" style="top:295px">    <span class="d"> <span class="as">*</span>/</span></div>
<div class="ln" style="top:312.8px">101</div><div class="cl" style="top:313px">    <span class="k">public static</span> Tinker <span class="m">with</span>(Context context) {</div>
<div class="ln" style="top:330.8px">102</div><div class="cl" style="top:331px">        <span class="k">if</span> (!<span class="sf">sInstalled</span>) {</div>
<div class="ln" style="top:348.8px">103</div><div class="cl" style="top:349px">            <span class="hl"><span class="k">throw new</span> TinkerRuntimeException(<span class="s">&quot;you must install tinker before get tinker sInstance&quot;</span>)<span class="k">;</span></span></div>
<div class="ln" style="top:366.8px">104</div><div class="cl" style="top:367px">        }</div>
<div class="ln" style="top:384.8px">105</div><div class="cl" style="top:385px">        <span class="k">if</span> (<span class="sf">sInstance</span> == <span class="k">null</span>) {</div>
<div class="ln" style="top:402.8px">106</div><div class="cl" style="top:403px">            <span class="k">synchronized</span> (Tinker.<span class="k">class</span>) {</div>
<div class="ln" style="top:420.8px">107</div><div class="cl" style="top:421px">                <span class="k">if</span> (<span class="sf">sInstance</span> == <span class="k">null</span>) {</div>
<div class="ln" style="top:438.8px">108</div><div class="cl" style="top:439px">                    <span class="sf">sInstance</span> = <span class="k">new</span> Builder(context).build()<span class="k">;</span></div>
<div class="ln" style="top:456.8px">109</div><div class="cl" style="top:457px">                }</div>
<div class="ln" style="top:474.8px">110</div><div class="cl" style="top:475px">            }</div>
<div class="ln" style="top:492.8px">111</div><div class="cl" style="top:493px">        }</div>
<div class="ln" style="top:510.8px">112</div><div class="cl" style="top:511px">        <span class="hl"><span class="k">return</span> <span class="sf">sInstance</span><span class="k">;</span></span></div>
<div class="ln" style="top:528.8px">113</div><div class="cl" style="top:529px">    }</div>
<div class="ln" style="top:546.8px">114</div><div class="cl" style="top:547px"></div>
<div class="ln" style="top:564.8px">115</div><div class="cl" style="top:565px">    <span class="d">/<span class="as">*</span><span class="as">*</span></span></div>
<svg class="abs" style="left:1112px;top:0" width="142" height="583" viewBox="1127 106 142 583" shape-rendering="crispEdges">
<rect x="1157" y="184" width="110" height="96" fill="#434343"/>
<path d="M1162 108h5M1190 108h1M1162 111h5M1194 111h1M1162 114h5M1195 114h1M1162 117h5M1195 117h1M1162 120h5M1199 120h1M1162 123h5M1168 123h7M1195 123h1M1162 126h5M1168 126h7M1196 126h1M1162 138h5M1168 138h7M1202 138h1M1162 153h3M1190 153h1M1195 156h1M1162 168h7M1170 168h7M1187 168h6M1162 174h7M1192 174h1M1194 174h3M1209 174h1M1236 174h1M1265 174h1M1199 177h1M1220 177h1M1240 177h1M1264 177h1M1177 180h7M1197 180h1M1199 180h7M1221 180h1M1223 180h7M1166 183h4M1188 183h1M1162 303h6M1169 303h6M1176 303h4M1166 306h2M1183 306h4M1170 309h5M1176 309h3M1237 309h1M1184 315h1M1162 324h6M1169 324h6M1176 324h7M1166 327h6M1183 327h1M1162 357h6M1169 357h4M1201 357h1M1211 357h7M1254 357h1M1179 363h5M1215 366h1M1230 366h1M1181 372h1M1233 372h1M1252 372h1M1166 378h2M1185 381h1M1208 381h1M1170 384h7M1166 390h2M1186 390h4M1170 393h5M1176 393h3M1236 393h1M1185 399h3M1207 399h1M1213 402h1M1228 402h1M1206 408h1M1233 408h1M1261 408h1M1166 414h2M1185 417h1M1207 417h1M1162 444h6M1169 444h4M1204 444h3M1212 447h1M1162 465h6M1166 468h6M1189 468h1M1162 477h6M1169 477h4M1186 480h1M1215 480h6M1222 480h3M1241 480h1M1162 489h6M1166 492h6M1180 492h1M1162 501h6M1169 501h7M1166 504h6M1186 504h1M1162 513h6M1169 513h7M1166 516h6M1187 516h1M1162 525h6M1169 525h4M1209 528h1M1162 537h6M1166 540h6M1185 540h1M1162 549h6M1166 552h6M1186 552h1M1162 561h6M1169 561h7M1166 564h6M1222 564h1M1162 573h6M1169 573h7M1166 576h6M1179 576h1M1162 585h6M1169 585h4M1190 585h7M1183 588h1M1162 597h6M1169 597h7M1166 600h6M1193 600h1M1162 609h6M1169 609h7M1166 612h6M1228 612h1M1162 621h6M1169 621h7M1166 624h6M1234 624h1M1162 633h6M1169 633h7M1166 636h6M1233 636h1M1162 645h6M1166 648h6M1187 648h1M1162 657h6M1166 660h6M1186 660h1M1162 669h6M1166 672h6M1190 672h1M1162 681h6M1166 684h6M1181 684h1" stroke="#9b6632" stroke-width="2" fill="none"/>
<path d="M1168 108h13M1182 108h8M1168 111h12M1182 111h12M1168 114h13M1182 114h13M1168 117h4M1182 117h13M1168 120h4M1182 120h17M1182 123h13M1182 126h14M1182 138h20M1179 153h11M1162 156h16M1179 156h16M1178 168h6M1170 174h14M1185 174h7M1198 174h11M1211 174h12M1224 174h12M1238 174h13M1252 174h13M1177 177h13M1191 177h8M1201 177h4M1206 177h14M1222 177h4M1227 177h13M1242 177h4M1247 177h17M1185 180h12M1207 180h14M1231 180h21M1170 183h8M1181 183h7M1181 303h13M1195 303h7M1169 306h10M1180 306h1M1187 306h1M1180 309h23M1236 309h1M1166 315h9M1178 315h6M1184 324h19M1173 327h10M1174 357h14M1189 357h12M1203 357h7M1219 357h22M1242 357h12M1182 360h13M1196 360h13M1166 363h10M1166 366h49M1217 366h13M1166 372h15M1235 372h17M1254 372h13M1169 378h20M1170 381h15M1207 381h1M1169 390h13M1190 390h1M1180 393h23M1235 393h1M1166 399h16M1189 399h18M1166 402h47M1215 402h13M1166 408h40M1208 408h25M1235 408h26M1169 414h9M1170 417h15M1206 417h1M1174 444h30M1208 444h3M1166 447h46M1169 465h16M1186 465h30M1173 468h16M1174 477h14M1189 477h13M1166 480h20M1188 480h27M1226 480h15M1169 489h7M1177 489h12M1173 492h7M1177 501h15M1173 504h13M1177 513h16M1173 516h14M1174 525h18M1166 528h11M1180 528h29M1169 537h12M1182 537h17M1173 540h12M1169 549h13M1183 549h18M1173 552h13M1177 561h17M1173 564h49M1177 573h16M1173 576h6M1174 585h16M1198 585h9M1166 588h6M1175 588h8M1177 597h20M1173 600h20M1177 609h17M1173 612h55M1177 621h23M1173 624h61M1177 633h22M1173 636h60M1169 645h4M1174 645h19M1173 648h14M1169 657h4M1174 657h18M1173 660h13M1169 669h4M1174 669h22M1173 672h17M1169 681h13M1183 681h18M1173 684h8" stroke="#68707a" stroke-width="2" fill="none"/>
<path d="M1162 129h3M1163 132h1M1165 132h4M1170 132h4M1175 132h6M1182 132h39M1163 135h2M1162 144h3M1163 147h1M1165 147h4M1170 147h4M1175 147h6M1182 147h30M1163 150h2M1162 159h3M1163 162h1M1165 162h7M1173 162h4M1178 162h5M1184 162h7M1163 165h2M1162 285h3M1163 288h1M1165 288h6M1172 288h6M1179 288h6M1186 288h2M1189 288h6M1196 288h15M1163 291h1M1165 291h6M1172 291h2M1175 291h2M1178 291h4M1183 291h4M1188 291h5M1194 291h4M1199 291h3M1203 291h6M1163 294h1M1163 297h1M1165 297h6M1172 297h6M1163 300h2M1162 336h3M1163 339h1M1165 339h3M1169 339h4M1174 339h7M1182 339h6M1189 339h7M1163 342h1M1163 345h1M1165 345h6M1172 345h12M1163 348h1M1165 348h6M1172 348h12M1163 351h1M1165 351h6M1172 351h12M1163 354h2M1162 429h3M1163 432h1M1165 432h3M1169 432h32M1163 435h1M1163 438h1M1165 438h6M1172 438h2M1163 441h2M1162 456h3M1163 459h1M1165 459h9M1175 459h6M1182 459h5M1188 459h3M1192 459h6M1199 459h4M1204 459h5M1163 462h2" stroke="#53673a" stroke-width="2" fill="none"/>
<path d="M1185 168h1M1253 180h1M1179 183h1M1203 303h1M1181 306h1M1189 306h1M1166 312h1M1176 315h1M1162 318h1M1204 324h1M1162 330h1M1210 360h1M1177 363h1M1190 378h1M1166 387h1M1183 390h2M1192 390h1M1166 396h1M1183 399h1M1179 414h1M1166 420h1M1162 423h1M1212 444h1M1162 450h1M1217 465h1M1162 471h1M1203 477h1M1162 483h1M1190 489h1M1162 495h1M1193 501h1M1162 507h1M1194 513h1M1162 519h1M1193 525h1M1178 528h1M1162 531h1M1200 537h1M1162 543h1M1202 549h1M1162 555h1M1195 561h1M1162 567h1M1194 573h1M1162 579h1M1208 585h1M1173 588h1M1162 591h1M1198 597h1M1162 603h1M1195 609h1M1162 615h1M1201 621h1M1162 627h1M1200 633h1M1162 639h1M1194 645h1M1162 651h1M1193 657h1M1162 663h1M1197 669h1M1162 675h1M1202 681h1M1162 687h1" stroke="#70777e" stroke-width="2" fill="none"/>
<path d="M1166 186h4M1190 186h1M1166 189h4M1198 189h1M1166 192h4M1200 192h1M1166 195h4M1196 195h1M1166 198h4M1202 198h1M1166 201h4M1200 201h1M1166 204h4M1208 204h1M1166 207h4M1199 207h1M1166 210h4M1214 210h1M1166 213h4M1202 213h1M1162 243h6M1169 243h6M1166 246h2M1170 249h5M1176 249h3M1257 249h1M1166 255h2M1183 255h4M1170 258h12M1191 258h5M1174 261h2M1191 261h4M1190 264h3M1218 264h1M1166 276h6M1182 276h1" stroke="#8c6146" stroke-width="2" fill="none"/>
<path d="M1170 186h9M1182 186h8M1170 189h13M1186 189h12M1170 192h14M1187 192h13M1170 195h12M1185 195h11M1170 198h15M1188 198h14M1170 201h14M1187 201h13M1170 204h18M1191 204h17M1170 207h14M1187 207h12M1170 210h21M1194 210h20M1170 213h15M1188 213h14M1176 243h6M1183 243h12M1196 243h8M1169 246h13M1180 249h23M1256 249h1M1169 255h10M1187 255h1M1183 258h8M1196 258h1M1177 261h10M1195 261h1M1178 264h9M1194 264h24M1173 276h9" stroke="#72787e" stroke-width="2" fill="none"/>
<path d="M1180 186h1M1184 189h1M1185 192h1M1183 195h1M1186 198h1M1185 201h1M1189 204h1M1185 207h1M1192 210h1M1186 213h1M1162 216h1M1205 243h1M1183 246h1M1166 252h1M1180 255h2M1189 255h1M1198 258h1M1188 261h2M1197 261h1M1188 264h1M1174 267h1M1170 270h1M1166 273h1M1162 279h1" stroke="#80858a" stroke-width="2" fill="none"/>
<path d="M1162 222h3M1163 225h1M1165 225h4M1170 225h4M1175 225h7M1183 225h6M1190 225h6M1163 228h1M1165 228h3M1169 228h6M1176 228h3M1180 228h4M1185 228h3M1189 228h6M1196 228h24M1221 228h6M1163 231h1M1163 234h1M1165 234h6M1172 234h7M1180 234h2M1183 234h4M1188 234h3M1192 234h3M1196 234h11M1208 234h7M1163 237h1M1165 237h7M1173 237h3M1177 237h6M1184 237h6M1163 240h2" stroke="#588a4d" stroke-width="2" fill="none"/>
<path d="M1203 249h4M1208 249h4M1213 249h7M1221 249h6M1228 249h6M1235 249h3M1239 249h6M1246 249h10" stroke="#5c5e5c" stroke-width="2" fill="none"/>
<path d="M1203 309h7M1211 309h8M1220 309h2M1223 309h7M1231 309h5M1183 372h4M1188 372h2M1191 372h7M1199 372h7M1207 372h9M1217 372h3M1221 372h8M1230 372h3M1187 381h7M1195 381h2M1198 381h9M1203 393h13M1217 393h4M1222 393h3M1226 393h2M1229 393h6M1187 417h7M1195 417h4M1200 417h6" stroke="#586c3c" stroke-width="2" fill="none"/>
<path d="M1166 405h7M1174 405h4M1179 405h4M1184 405h3" stroke="#555555" stroke-width="2" fill="none"/>
<rect x="1267" y="106" width="1" height="583" fill="#3a3b3c"/>
<rect x="1145" y="109" width="10" height="10" fill="#c4941b"/>
<rect x="1143" y="149" width="14" height="3" fill="#c4941b"/>
<rect x="1143" y="157" width="14" height="2" fill="#c4941b"/>
<rect x="1143" y="161" width="14" height="2" fill="#c4941b"/>
<rect x="1143" y="167" width="14" height="11" fill="#c4941b"/>
<rect x="1143" y="182" width="14" height="2" fill="#c4941b"/>
<rect x="1143" y="188" width="14" height="4" fill="#c4941b"/>
<rect x="1143" y="253" width="14" height="2" fill="#c4941b"/>
<rect x="1143" y="256" width="14" height="2" fill="#c4941b"/>
<rect x="1143" y="265" width="14" height="2" fill="#c4941b"/>
<rect x="1143" y="274" width="14" height="5" fill="#c4941b"/>
<rect x="1143" y="280" width="14" height="2" fill="#c4941b"/>
<rect x="1143" y="316" width="14" height="2" fill="#c4941b"/>
<rect x="1143" y="319" width="14" height="2" fill="#c4941b"/>
<rect x="1143" y="334" width="14" height="2" fill="#c4941b"/>
<rect x="1143" y="382" width="14" height="2" fill="#c4941b"/>
<rect x="1143" y="414" width="14" height="2" fill="#c4941b"/>
<rect x="1143" y="420" width="14" height="2" fill="#c4941b"/>
<rect x="1143" y="425" width="14" height="2" fill="#c4941b"/>
<rect x="1143" y="459" width="14" height="2" fill="#c4941b"/>
<rect x="1143" y="479" width="14" height="4" fill="#c4941b"/>
<rect x="1143" y="496" width="14" height="2" fill="#c4941b"/>
<rect x="1143" y="499" width="14" height="2" fill="#c4941b"/>
<rect x="1143" y="514" width="14" height="2" fill="#c4941b"/>
<rect x="1143" y="551" width="14" height="2" fill="#c4941b"/>
<rect x="1143" y="574" width="14" height="2" fill="#c4941b"/>
<rect x="1143" y="585" width="14" height="2" fill="#c4941b"/>
<rect x="1143" y="600" width="14" height="2" fill="#c4941b"/>
<rect x="1143" y="615" width="14" height="2" fill="#c4941b"/>
<rect x="1143" y="629" width="14" height="2" fill="#c4941b"/>
<rect x="1143" y="231" width="14" height="2" fill="#0b7d2b"/><rect x="1143" y="243" width="14" height="2" fill="#0b7d2b"/>
<rect x="1147" y="209" width="7" height="37" rx="3.5" fill="#505050" fill-opacity="0.8" shape-rendering="auto"/>
</svg>

</div>
<div id="bottombar" class="abs">
<div class="abs" style="left:0;top:0;width:1280px;height:1px;background:#555759"></div>
<div class="abs" style="left:0;top:21px;width:1280px;height:1px;background:#444648"></div>
<svg class="abs" style="left:0;top:0" width="1280" height="24" viewBox="0 690 1280 24"><path d="M27.8 708.2c0.400 -3.400 7.200 -3.400 7.600 0z" fill="#2f9be6"/><ellipse cx="31.600" cy="702.700" rx="4.500" ry="3.500" fill="#f6b25e"/><path d="M28.600 701.200c0.600 -5.200 7.600 -5.200 7.600 0.400l-1.200 -1.400h-5z" fill="#8e9296"/><circle cx="30.300" cy="702.600" r="0.600" fill="#2d2d2d"/><circle cx="32.900" cy="702.600" r="0.600" fill="#2d2d2d"/><ellipse cx="26.700" cy="698.200" rx="3.100" ry="2.800" fill="#fafafa"/><path d="M29 699.400l1.400 0.800l-1.800 0.600z" fill="#fafafa"/><path d="M24.900 697.300h3.600M24.900 699.100h3.600" stroke="#3a3a3a" stroke-width="0.800"/><g fill="#7fa82c" transform="translate(-0.8 0.4)"><path d="M100.8 699.2a4.2 3.8 0 0 1 8.4 0z"/><rect x="100.8" y="699.9" width="8.4" height="5.6" rx="0.8"/><rect x="98.8" y="699.9" width="1.5" height="4.2" rx="0.7"/><rect x="109.7" y="699.9" width="1.5" height="4.2" rx="0.7"/><rect x="102.2" y="705" width="1.7" height="2.8" rx="0.6"/><rect x="106.1" y="705" width="1.7" height="2.8" rx="0.6"/><path d="M102.4 696.4l-1 -1.6M107.600 696.4l1 -1.6" stroke="#7fa82c" stroke-width="0.8"/><circle cx="103.200" cy="697.600" r="0.500" fill="#3c3f41"/><circle cx="106.800" cy="697.600" r="0.500" fill="#3c3f41"/></g><rect x="252" y="695.4" width="8.6" height="8.6" fill="#4a8fd0"/><circle cx="260" cy="702.6" r="5.2" fill="#e8a040"/><path d="M255.6 700.4a5.2 5.2 0 0 1 5 -1.4v5h-5.6a5.2 5.2 0 0 1 0.6 -3.6z" fill="#28b838"/><rect x="397.4" y="695.8" width="12.2" height="11.6" fill="#0a0a0a" stroke="#8a8a8a" stroke-width="1"/><rect x="397.4" y="695.4" width="12.2" height="1.8" fill="#8a8a8a"/><path d="M399.8 700l2.6 2.2l-2.6 2.2" fill="none" stroke="#fff" stroke-width="1.1"/><path d="M403.4 705h3.4" stroke="#fff" stroke-width="1.1"/><circle cx="1062" cy="701.2" r="7" fill="#5fc374"/><path d="M1066 706l3.2 2.8l-6 -1z" fill="#5fc374"/><text x="1059" y="705" font-family="Liberation Sans, sans-serif" font-size="10.5" font-weight="bold" fill="#1e2a22">2</text><rect x="1152.5" y="695.4" width="11.4" height="11.6" fill="#3c3f41" stroke="#8a8d90" stroke-width="1"/><rect x="1152" y="694.8" width="12.4" height="2.6" fill="#4a90d0"/><path d="M1155 700.2h6.4M1155 702.4h6.4M1155 704.6h4.4" stroke="#5aa0e0" stroke-width="1.1"/></svg>
<span class="bt" style="left:40.3px;letter-spacing:-0.655px">TODO</span>
<span class="bt" style="left:116.2px;letter-spacing:0.161px"><u>6</u>: Android Monitor</span>
<span class="bt" style="left:269.0px;letter-spacing:0.059px"><u>9</u>: Version Control</span>
<span class="bt" style="left:414.7px;letter-spacing:0.185px">Terminal</span>
<span class="bt" style="left:1074.7px;letter-spacing:-0.460px">Event Log</span>
<span class="bt" style="left:1169.4px;letter-spacing:-0.223px">Gradle Console</span>

</div>
<div id="status" class="abs">
<div class="abs" style="left:0;top:2px;width:12px;height:6px;background:#45455c;border:1px solid #b4b4b4;border-left:none"></div>
<div class="abs" style="left:1198px;top:0;width:20px;height:7px;background:#5c5f61"></div>
<div class="abs" style="left:1218px;top:0;width:62px;height:7px;background:#45484a"></div>
<span class="st" style="left:25.3px;top:3.2px;color:#bbbbbb;letter-spacing:-0.124px;">Platform and Plugin Updates: The following components are ready to update: Android Emulator, Google Play services, Google ... (today 5:03 PM)</span>
<span class="st" style="left:796.0px;top:3.2px;color:#bbbbbb;letter-spacing:-0.117px;">103:15</span>
<span class="st" style="left:844.3px;top:3.2px;color:#bbbbbb;letter-spacing:-0.302px;">LF</span>
<span class="st" style="left:858.6px;top:3.2px;color:#bbbbbb;">&#247;</span>
<span class="st" style="left:873.7px;top:3.2px;color:#bbbbbb;letter-spacing:-0.679px;">UTF-8</span>
<span class="st" style="left:905.4px;top:3.2px;color:#bbbbbb;">&#247;</span>
<span class="st" style="left:924.0px;top:3.2px;color:#bbbbbb;letter-spacing:-0.153px;">Git: master</span>
<span class="st" style="left:983.6px;top:3.2px;color:#bbbbbb;">&#247;</span>
<span class="st" style="left:1003.7px;top:3.2px;color:#777a7c;">Context: &lt;no context&gt;</span>
<svg class="abs" style="left:0;top:0" width="1280" height="7" viewBox="0 713 1280 7"><circle cx="1157" cy="720.4" r="2.6" fill="none" stroke="#9a9a9a" stroke-width="1"/><rect x="1180.5" y="715.5" width="7" height="8" rx="2.4" fill="none" stroke="#b0b0b0" stroke-width="1"/><path d="M1184 716.4v2.4" stroke="#b0b0b0" stroke-width="1"/></svg>
<span class="st" style="left:1207px;top:3.2px;font-family:'DejaVu Sans Mono',monospace;font-size:11.5px;color:#c0c0c0">201 of 1246M</span>

</div>
</body></html>
